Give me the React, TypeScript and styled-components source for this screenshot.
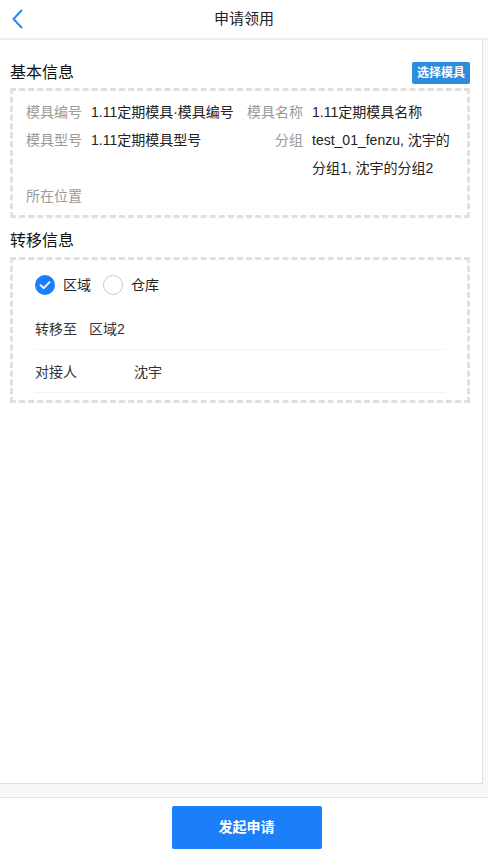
import styled, { createGlobalStyle } from 'styled-components'

const GlobalStyle = createGlobalStyle`
  * {
    box-sizing: border-box;
  }

  body {
    margin: 0;
    font-family: 'Liberation Sans', 'Noto Sans CJK SC', sans-serif;
    color: #222;
    background: #fff;
  }
`

interface InfoField {
  label: string
  value: string
}

const basicInfo: InfoField[] = [
  { label: '模具编号', value: '1.11定期模具·模具编号' },
  { label: '模具名称', value: '1.11定期模具名称' },
  { label: '模具型号', value: '1.11定期模具型号' },
  { label: '分组', value: 'test_01_fenzu, 沈宇的分组1, 沈宇的分组2' },
  { label: '所在位置', value: '' },
]

const BackIcon = () => (
  <svg width='12' height='20' viewBox='0 0 12 20' fill='none'>
    <path d='M10.5 1.5 L2.5 10 L10.5 18.5' stroke='#2a86f6' strokeWidth='2' strokeLinecap='round' strokeLinejoin='round' />
  </svg>
)

const RadioIcon = ({ checked }: { checked: boolean }) =>
  checked ? (
    <svg width='20' height='20' viewBox='0 0 20 20'>
      <circle cx='10' cy='10' r='10' fill='#1a7ff9' />
      <path d='M5.5 10.2 L8.6 13.2 L14.6 7.2' stroke='#fff' strokeWidth='1.8' fill='none' strokeLinecap='round' strokeLinejoin='round' />
    </svg>
  ) : (
    <svg width='20' height='20' viewBox='0 0 20 20'>
      <circle cx='10' cy='10' r='9.5' fill='#fff' stroke='#c9c9c9' />
    </svg>
  )

const App = () => {
  return (
    <Page>
      <GlobalStyle />

      <Header>
        <BackButton>
          <BackIcon />
        </BackButton>
        <HeaderTitle>申请领用</HeaderTitle>
      </Header>

      <Main>
        <Panel>
          <SectionHead>
            <SectionTitle>基本信息</SectionTitle>
            <SelectButton>选择模具</SelectButton>
          </SectionHead>

          <DashedBox>
            <InfoGrid>
              {basicInfo.map((field) => (
                <InfoItem key={field.label}>
                  <InfoLabel>{field.label}</InfoLabel>
                  <InfoValue>{field.value}</InfoValue>
                </InfoItem>
              ))}
            </InfoGrid>
          </DashedBox>

          <SectionHead $gap>
            <SectionTitle>转移信息</SectionTitle>
          </SectionHead>

          <TransferBox>
            <RadioRow>
              <RadioOption>
                <RadioIcon checked />
                区域
              </RadioOption>
              <RadioOption>
                <RadioIcon checked={false} />
                仓库
              </RadioOption>
            </RadioRow>

            <FieldRow>
              <FieldLabel $width={54}>转移至</FieldLabel>
              <FieldValue>区域2</FieldValue>
            </FieldRow>

            <FieldRow>
              <FieldLabel $width={99}>对接人</FieldLabel>
              <FieldValue>沈宇</FieldValue>
            </FieldRow>
          </TransferBox>
        </Panel>
      </Main>

      <Footer>
        <SubmitButton>发起申请</SubmitButton>
      </Footer>
    </Page>
  )
}

export default App

const Page = styled.div`
  width: 100%;
  height: 856px;
  display: flex;
  flex-direction: column;
  overflow: hidden;
`

const Header = styled.div`
  height: 40px;
  flex-shrink: 0;
  display: flex;
  align-items: center;
  justify-content: center;
  position: relative;
  border-bottom: 2px solid #ececec;
  background: #fff;
`

const BackButton = styled.div`
  position: absolute;
  left: 11px;
  top: 9px;
  display: flex;
`

const HeaderTitle = styled.div`
  font-size: 15px;
  line-height: 38px;
  color: #222;
`

const Main = styled.div`
  flex: 1;
  display: flex;
  flex-direction: column;
  background: #f8f8f8;
  padding: 0 5px 13px 0;
`

const Panel = styled.div`
  flex: 1;
  background: #fff;
  border-right: 1px solid #e0e0e0;
  border-bottom: 1px solid #e0e0e0;
  padding: 18px 12px 0 10px;
`

const SectionHead = styled.div<{ $gap?: boolean }>`
  display: flex;
  align-items: center;
  justify-content: space-between;
  margin-top: ${({ $gap }) => ($gap ? '7px' : '0')};
  height: ${({ $gap }) => ($gap ? '32px' : '30px')};
`

const SectionTitle = styled.div`
  font-size: 16px;
  line-height: 22px;
  color: #111;
`

const SelectButton = styled.div`
  width: 58px;
  height: 22px;
  border-radius: 2px;
  background: #2d8ddb;
  color: #fff;
  font-size: 12px;
  font-weight: bold;
  line-height: 22px;
  text-align: center;
`

const DashedBox = styled.div`
  border: 3px dashed #e0e0e0;
  padding: 7px 0 5px 13px;
`

const InfoGrid = styled.div`
  display: grid;
  grid-template-columns: 221px 1fr;
`

const InfoItem = styled.div`
  display: flex;
  align-items: flex-start;
  font-size: 14px;
  line-height: 28px;
`

const InfoLabel = styled.div`
  width: 56px;
  flex-shrink: 0;
  margin-right: 9px;
  text-align: right;
  color: #9a9a9a;
  white-space: nowrap;
`

const InfoValue = styled.div`
  max-width: 146px;
  color: #222;
  white-space: pre-wrap;
`

const TransferBox = styled.div`
  border: 3px dashed #e0e0e0;
  padding: 0 22px 7px;
`

const RadioRow = styled.div`
  display: flex;
  align-items: center;
  gap: 12px;
  padding: 15px 0 12px;
`

const RadioOption = styled.div`
  display: flex;
  align-items: center;
  gap: 8px;
  font-size: 14px;
  line-height: 20px;
  color: #222;
`

const FieldRow = styled.div`
  height: 43px;
  display: flex;
  align-items: center;
  border-bottom: 1px solid #f2f2f2;
  font-size: 14px;
  color: #333;
`

const FieldLabel = styled.div<{ $width: number }>`
  width: ${({ $width }) => $width}px;
  flex-shrink: 0;
`

const FieldValue = styled.div``

const Footer = styled.div`
  height: 59px;
  flex-shrink: 0;
  border-top: 1px solid #e6e6e6;
  background: #fff;
  display: flex;
  justify-content: center;
  padding: 8px 0 0 5px;
`

const SubmitButton = styled.div`
  width: 150px;
  height: 43px;
  border-radius: 2px;
  background: #1a7ff9;
  color: #fff;
  font-size: 14px;
  font-weight: bold;
  line-height: 43px;
  text-align: center;
`
